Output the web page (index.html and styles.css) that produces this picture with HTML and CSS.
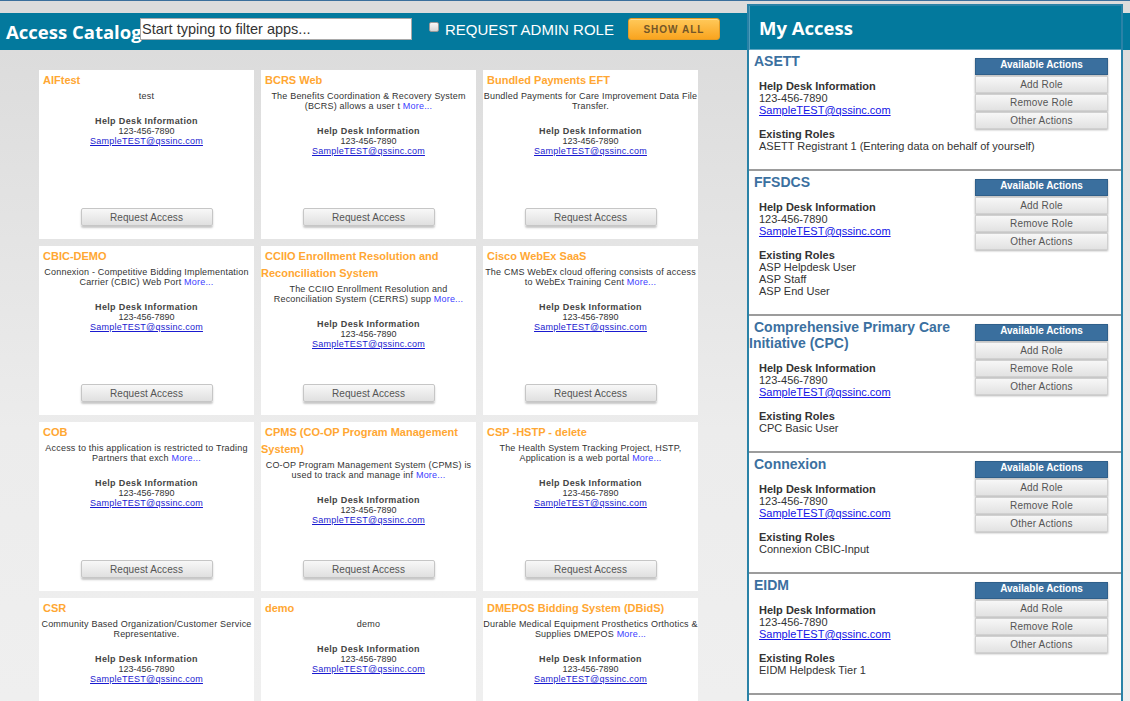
FILE: index.html
```html
<!DOCTYPE html>
<html lang="en">
<head>
<meta charset="utf-8">
<title>Access Catalog</title>
<link rel="stylesheet" href="styles.css">
</head>
<body>
<div class="topline"></div>
<div class="page">
  <div class="main">
    <div class="topbar">
      <h1 class="brand">Access Catalog</h1>
      <input class="filter" type="text" placeholder="Start typing to filter apps...">
      <label class="admin"><input type="checkbox" class="admin-box"><span>REQUEST ADMIN ROLE</span></label>
      <button class="show-all">SHOW ALL</button>
    </div>
    <div class="catalog">
      <div class="card">
        <div class="card-title">AIFtest</div>
        <div class="card-desc">test</div>
        <div class="help"><div class="help-h">Help Desk Information</div><div class="phone">123-456-7890</div><a class="mail" href="#">SampleTEST@qssinc.com</a></div>
        <button class="req">Request Access</button>
      </div>
      <div class="card">
        <div class="card-title">BCRS Web</div>
        <div class="card-desc">The Benefits Coordination &amp; Recovery System<br>(BCRS) allows a user t <a class="more" href="#">More...</a></div>
        <div class="help"><div class="help-h">Help Desk Information</div><div class="phone">123-456-7890</div><a class="mail" href="#">SampleTEST@qssinc.com</a></div>
        <button class="req">Request Access</button>
      </div>
      <div class="card">
        <div class="card-title">Bundled Payments EFT</div>
        <div class="card-desc">Bundled Payments for Care Improvement Data File<br>Transfer.</div>
        <div class="help"><div class="help-h">Help Desk Information</div><div class="phone">123-456-7890</div><a class="mail" href="#">SampleTEST@qssinc.com</a></div>
        <button class="req">Request Access</button>
      </div>

      <div class="card">
        <div class="card-title">CBIC-DEMO</div>
        <div class="card-desc">Connexion - Competitive Bidding Implementation<br>Carrier (CBIC) Web Port <a class="more" href="#">More...</a></div>
        <div class="help"><div class="help-h">Help Desk Information</div><div class="phone">123-456-7890</div><a class="mail" href="#">SampleTEST@qssinc.com</a></div>
        <button class="req">Request Access</button>
      </div>
      <div class="card">
        <div class="card-title">CCIIO Enrollment Resolution and Reconciliation System</div>
        <div class="card-desc">The CCIIO Enrollment Resolution and<br>Reconciliation System (CERRS) supp <a class="more" href="#">More...</a></div>
        <div class="help"><div class="help-h">Help Desk Information</div><div class="phone">123-456-7890</div><a class="mail" href="#">SampleTEST@qssinc.com</a></div>
        <button class="req">Request Access</button>
      </div>
      <div class="card">
        <div class="card-title">Cisco WebEx SaaS</div>
        <div class="card-desc">The CMS WebEx cloud offering consists of access<br>to WebEx Training Cent <a class="more" href="#">More...</a></div>
        <div class="help"><div class="help-h">Help Desk Information</div><div class="phone">123-456-7890</div><a class="mail" href="#">SampleTEST@qssinc.com</a></div>
        <button class="req">Request Access</button>
      </div>

      <div class="card">
        <div class="card-title">COB</div>
        <div class="card-desc">Access to this application is restricted to Trading<br>Partners that exch <a class="more" href="#">More...</a></div>
        <div class="help"><div class="help-h">Help Desk Information</div><div class="phone">123-456-7890</div><a class="mail" href="#">SampleTEST@qssinc.com</a></div>
        <button class="req">Request Access</button>
      </div>
      <div class="card">
        <div class="card-title">CPMS (CO-OP Program Management System)</div>
        <div class="card-desc">CO-OP Program Management System (CPMS) is<br>used to track and manage inf <a class="more" href="#">More...</a></div>
        <div class="help"><div class="help-h">Help Desk Information</div><div class="phone">123-456-7890</div><a class="mail" href="#">SampleTEST@qssinc.com</a></div>
        <button class="req">Request Access</button>
      </div>
      <div class="card">
        <div class="card-title">CSP -HSTP - delete</div>
        <div class="card-desc">The Health System Tracking Project, HSTP,<br>Application is a web portal <a class="more" href="#">More...</a></div>
        <div class="help"><div class="help-h">Help Desk Information</div><div class="phone">123-456-7890</div><a class="mail" href="#">SampleTEST@qssinc.com</a></div>
        <button class="req">Request Access</button>
      </div>

      <div class="card">
        <div class="card-title">CSR</div>
        <div class="card-desc">Community Based Organization/Customer Service<br>Representative.</div>
        <div class="help"><div class="help-h">Help Desk Information</div><div class="phone">123-456-7890</div><a class="mail" href="#">SampleTEST@qssinc.com</a></div>
        <button class="req">Request Access</button>
      </div>
      <div class="card">
        <div class="card-title">demo</div>
        <div class="card-desc">demo</div>
        <div class="help"><div class="help-h">Help Desk Information</div><div class="phone">123-456-7890</div><a class="mail" href="#">SampleTEST@qssinc.com</a></div>
        <button class="req">Request Access</button>
      </div>
      <div class="card">
        <div class="card-title">DMEPOS Bidding System (DBidS)</div>
        <div class="card-desc">Durable Medical Equipment Prosthetics Orthotics &amp;<br>Supplies DMEPOS <a class="more" href="#">More...</a></div>
        <div class="help"><div class="help-h">Help Desk Information</div><div class="phone">123-456-7890</div><a class="mail" href="#">SampleTEST@qssinc.com</a></div>
        <button class="req">Request Access</button>
      </div>
    </div>
  </div>

  <div class="panel">
    <div class="panel-head">My Access</div>

    <div class="item">
      <div class="actions">
        <div class="act-head">Available Actions</div>
        <button class="act-btn">Add Role</button>
        <button class="act-btn">Remove Role</button>
        <button class="act-btn">Other Actions</button>
      </div>
      <div class="item-title">ASETT</div>
      <div class="item-body">
        <div class="ib-h">Help Desk Information</div>
        <div>123-456-7890</div>
        <a class="ib-mail" href="#">SampleTEST@qssinc.com</a>
        <div class="roles">
          <div class="ib-h">Existing Roles</div>
          <div>ASETT Registrant 1 (Entering data on behalf of yourself)</div>
        </div>
      </div>
    </div>

    <div class="item">
      <div class="actions">
        <div class="act-head">Available Actions</div>
        <button class="act-btn">Add Role</button>
        <button class="act-btn">Remove Role</button>
        <button class="act-btn">Other Actions</button>
      </div>
      <div class="item-title">FFSDCS</div>
      <div class="item-body">
        <div class="ib-h">Help Desk Information</div>
        <div>123-456-7890</div>
        <a class="ib-mail" href="#">SampleTEST@qssinc.com</a>
        <div class="roles">
          <div class="ib-h">Existing Roles</div>
          <div>ASP Helpdesk User</div>
          <div>ASP Staff</div>
          <div>ASP End User</div>
        </div>
      </div>
    </div>

    <div class="item">
      <div class="actions">
        <div class="act-head">Available Actions</div>
        <button class="act-btn">Add Role</button>
        <button class="act-btn">Remove Role</button>
        <button class="act-btn">Other Actions</button>
      </div>
      <div class="item-title">Comprehensive Primary Care Initiative (CPC)</div>
      <div class="item-body">
        <div class="ib-h">Help Desk Information</div>
        <div>123-456-7890</div>
        <a class="ib-mail" href="#">SampleTEST@qssinc.com</a>
        <div class="roles">
          <div class="ib-h">Existing Roles</div>
          <div>CPC Basic User</div>
        </div>
      </div>
    </div>

    <div class="item">
      <div class="actions">
        <div class="act-head">Available Actions</div>
        <button class="act-btn">Add Role</button>
        <button class="act-btn">Remove Role</button>
        <button class="act-btn">Other Actions</button>
      </div>
      <div class="item-title">Connexion</div>
      <div class="item-body">
        <div class="ib-h">Help Desk Information</div>
        <div>123-456-7890</div>
        <a class="ib-mail" href="#">SampleTEST@qssinc.com</a>
        <div class="roles">
          <div class="ib-h">Existing Roles</div>
          <div>Connexion CBIC-Input</div>
        </div>
      </div>
    </div>

    <div class="item">
      <div class="actions">
        <div class="act-head">Available Actions</div>
        <button class="act-btn">Add Role</button>
        <button class="act-btn">Remove Role</button>
        <button class="act-btn">Other Actions</button>
      </div>
      <div class="item-title">EIDM</div>
      <div class="item-body">
        <div class="ib-h">Help Desk Information</div>
        <div>123-456-7890</div>
        <a class="ib-mail" href="#">SampleTEST@qssinc.com</a>
        <div class="roles">
          <div class="ib-h">Existing Roles</div>
          <div>EIDM Helpdesk Tier 1</div>
        </div>
      </div>
    </div>
  </div>
</div>
</body>
</html>
```

FILE: styles.css
```css
* { box-sizing: border-box; }

html, body { margin: 0; }

body {
  font-family: "Liberation Sans", Arial, sans-serif;
  background: linear-gradient(to bottom, #dcdcdc 0, #dcdcdc 13px, #03799d 13px, #03799d 50px, #dcdcdc 50px, #ededed 420px, #efefef 100%);
  min-height: 100vh;
}

.topline {
  height: 1px;
  background: #3b6f9c;
}

.page {
  display: flex;
  align-items: stretch;
}

/* ---------- left: catalog ---------- */
.main {
  width: 747px;
  flex: none;
  padding-top: 12px;
}

.topbar {
  height: 37px;
  background: #03799d;
  display: flex;
  align-items: center;
  padding: 0 0 5px 6px;
}

.brand {
  margin: 6px 0 0 0;
  width: 134px;
  flex: none;
  white-space: nowrap;
  font: 700 18.5px/1 "Open Sans", "Liberation Sans", sans-serif;
  color: #fff;
}

.filter {
  width: 272px;
  height: 22px;
  margin: 0;
  flex: none;
  border: 1px solid #a9a9a9;
  padding: 0 1px;
  font: 14.5px "Liberation Sans", Arial, sans-serif;
  color: #333;
  background: #fff;
  outline: none;
}
.filter::placeholder { color: #333; opacity: 1; }

.admin {
  display: flex;
  align-items: center;
  margin-left: 17px;
  color: #fff;
  font-size: 15px;
  white-space: nowrap;
}

.admin-box {
  appearance: none;
  -webkit-appearance: none;
  width: 10px;
  height: 10px;
  margin: 0 6px 4px 0;
  border: 1px solid #9a9a9a;
  border-radius: 2px;
  background: linear-gradient(#f8f8f8, #d6d6d6);
}

.show-all {
  margin-left: 14px;
  width: 92px;
  height: 22px;
  padding: 0;
  border: 1px solid #e39b25;
  border-radius: 3px;
  background: linear-gradient(#ffc95a, #f9a41f);
  box-shadow: inset 0 1px 0 rgba(255,255,255,.35);
  color: #735628;
  font: 700 10px "Liberation Sans", Arial, sans-serif;
  letter-spacing: 1px;
}

.catalog {
  display: grid;
  grid-template-columns: repeat(3, 215px);
  gap: 7px;
  padding: 20px 0 20px 39px;
  background: linear-gradient(to bottom, #dcdcdc, #ececec 380px, #f0f0f0);
}

.card {
  background: #fff;
  height: 169px;
  display: flex;
  flex-direction: column;
  font-size: 9px;
  color: #333;
  text-align: center;
}

.card-title {
  text-align: left;
  text-indent: 4px;
  padding-top: 2px;
  font: 700 11px/17px "Liberation Sans", Arial, sans-serif;
  color: #ffa733;
}

.card-desc {
  margin-top: 2px;
  line-height: 10px;
  white-space: nowrap;
  letter-spacing: .2px;
}

.more {
  color: #3c3cff;
  text-decoration: none;
}

.help {
  margin-top: 15px;
  line-height: 10px;
}

.help-h {
  font-weight: 700;
  color: #444;
  letter-spacing: .35px;
}

.phone { color: #333; }

.mail {
  color: #1a1ad0;
  letter-spacing: .25px;
}

.req {
  margin: auto auto 13px;
  width: 132px;
  height: 18px;
  padding: 0;
  border: 1px solid #c6c6c6;
  border-radius: 2px;
  background: linear-gradient(#f8f8f8, #e0e0e0);
  box-shadow: 0 2px 2px rgba(0,0,0,.22);
  color: #555;
  font: 10px "Liberation Sans", Arial, sans-serif;
  letter-spacing: .1px;
}

/* ---------- right: my access ---------- */
.panel {
  width: 376px;
  flex: none;
  margin-top: 3px;
  border: 2px solid #2a82a7;
  background: #fff;
}

.panel-head {
  height: 44px;
  background: #03799d;
  border-bottom: 1px solid #5ea6c1;
  box-shadow: inset 1px 0 0 #4d9dbb;
  display: flex;
  align-items: center;
  padding-left: 10px;
  color: #fff;
  font: 700 18.5px "Open Sans", "Liberation Sans", sans-serif;
}

.item {
  display: flow-root;
  padding: 3px 0 17px;
  border-bottom: 2px solid #9c9c9c;
}

.actions {
  float: right;
  width: 133px;
  margin: 5px 13px 0 10px;
}

.act-head {
  height: 17px;
  line-height: 15px;
  background: #3a6f9e;
  border: 1px solid #2f5f8a;
  box-shadow: 0 1px 2px rgba(0,0,0,.3);
  color: #fff;
  text-align: center;
  font: 700 10px "Liberation Sans", Arial, sans-serif;
}

.act-btn {
  display: block;
  width: 100%;
  height: 17px;
  margin-top: 1px;
  padding: 0;
  border: 1px solid #d0d0d0;
  background: linear-gradient(#f7f7f7, #e2e2e2);
  box-shadow: 0 1px 2px rgba(0,0,0,.3);
  color: #555;
  font: 10px "Liberation Sans", Arial, sans-serif;
  letter-spacing: .2px;
}

.item-title {
  text-indent: 5px;
  font: 700 14px/16px "Liberation Sans", Arial, sans-serif;
  color: #3b70a0;
}

.item-body {
  margin-top: 11px;
  padding-left: 10px;
  font-size: 11px;
  line-height: 12px;
  color: #333;
}

.ib-h { font-weight: 700; }

.ib-mail { color: #1414e6; }

.roles { margin-top: 12px; }
```
